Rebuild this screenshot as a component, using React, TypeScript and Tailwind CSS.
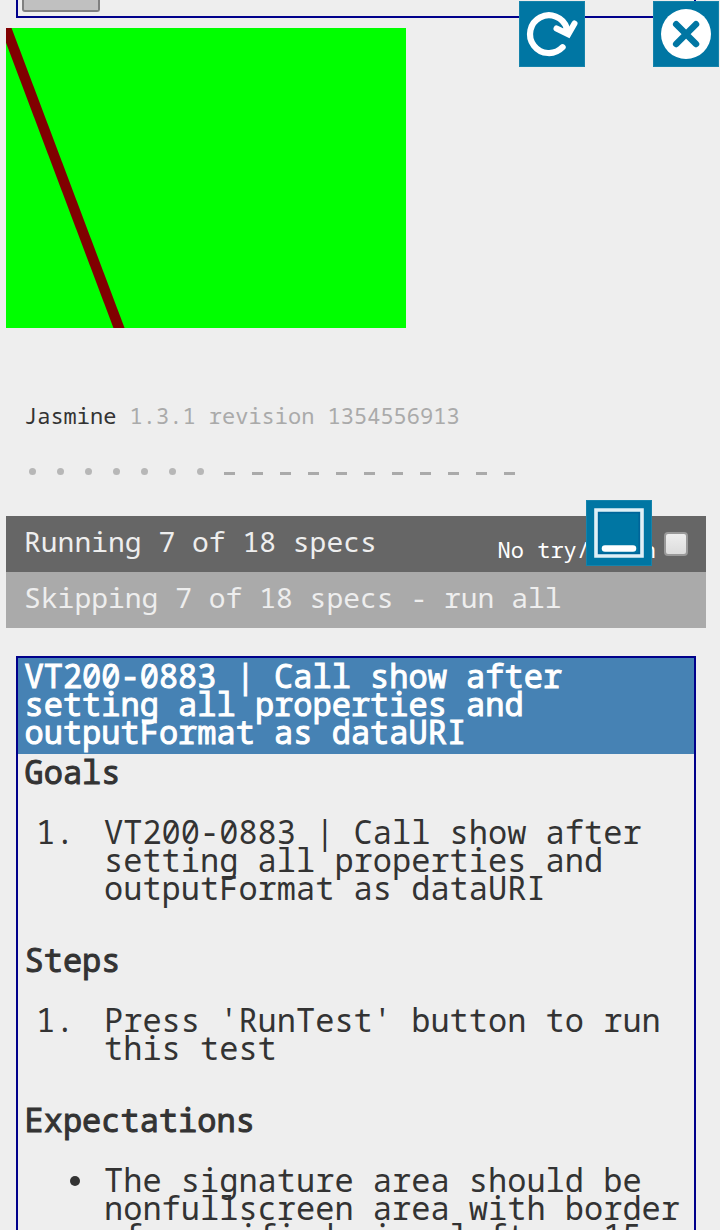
import React from "react";

const symbols = [..."•••••••-----------"];

function Tile({ className, children }: { className: string; children: React.ReactNode }) {
  return (
    <button className={`absolute size-[66px] border border-[#1583ab] bg-[#0076a3] ${className}`}>
      <svg viewBox="0 0 66 66" className="absolute -left-px -top-px size-[66px]" fill="none">
        {children}
      </svg>
    </button>
  );
}

function Heading({ children }: { children: React.ReactNode }) {
  return <h2 className="pl-[6.5px] [-webkit-text-stroke:1px_#333]">{children}</h2>;
}

export default function App() {
  return (
    <main className="relative h-[1230px] w-[720px] overflow-hidden bg-[#eee] font-['Droid_Sans_Mono','Noto_Sans_Mono','DejaVu_Sans_Mono',monospace] text-[#333]">
      <section className="mx-4 h-[18px] w-[680px] border-x-2 border-b-2 border-[#00008b] pl-1">
        <button className="block h-3 w-[78px] rounded-b-[3px] border-2 border-t-0 border-[#808080] bg-[#c0c0c0]" />
      </section>
      <svg className="ml-1.5 mt-2.5 block h-[300px] w-[400px] bg-[#0f0]" viewBox="0 0 400 300">
        <path d="M-5 -13.3L117 310.6" stroke="#800000" strokeWidth="10.4" />
      </svg>

      <div className="mt-[73px] h-7 whitespace-pre pl-6 text-[22px] leading-7">
        Jasmine <span className="text-[#aaa]">1.3.1 revision 1354556913</span>
      </div>
      <ul className="mt-7 flex h-7 pl-6 text-[#aaa]">
        {symbols.map((s, i) => (
          <li key={i} className="flex w-7 items-center">
            {s === "-" ? (
              <i className="ml-1 mt-[5px] h-[3px] w-[11px] bg-[#aaa]" />
            ) : (
              <i className="ml-[5px] size-[7px] rounded-full bg-[#b7b7b7]" />
            )}
          </li>
        ))}
      </ul>

      <div className="ml-1.5 mt-[31px] w-[700px] text-[28px] leading-[56px] text-[#eee]">
        <div className="flex h-14 justify-between bg-[#666] pl-[18px] pr-[18px]">
          <span className="-mt-[3px]">Running 7 of 18 specs</span>
          <label className="flex text-[22px] text-white">
            <span className="pt-[5px]">No try/catch</span>
            <span className="ml-2 mt-4 size-6 rounded-[4px] border-2 border-[#999] bg-linear-to-b from-[#eee] to-[#dcdcdc]" />
          </label>
        </div>
        <div className="h-14 bg-[#aaa] pl-[18px] leading-[50px]">
          Skipping 7 of 18 specs - run all
        </div>
      </div>

      <section className="mx-4 mt-7 h-[640px] w-[680px] border-2 border-[#00008b] text-[32px] leading-7">
        <h1 className="h-24 bg-[#4682b4] pl-[6.5px] pt-[3.5px] text-white [-webkit-text-stroke:1px_#fff]">
          VT200-0883 | Call show after<br />setting all properties and<br />outputFormat as dataURI
        </h1>
        <div className="pt-1">
          <Heading>Goals</Heading>
          <ol className="mt-8 flex">
            <li className="w-[86px] shrink-0 pl-[18px]">1.</li>
            <li>VT200-0883 | Call show after<br />setting all properties and<br />outputFormat as dataURI</li>
          </ol>
          <div className="mt-11"><Heading>Steps</Heading></div>
          <ol className="mt-8 flex">
            <li className="w-[86px] shrink-0 pl-[18px]">1.</li>
            <li>Press 'RunTest' button to run<br />this test</li>
          </ol>
          <div className="mt-11"><Heading>Expectations</Heading></div>
          <div className="mt-8 flex whitespace-nowrap">
            <span className="w-[86px] shrink-0 pl-[52px] pt-2.5"><i className="block size-2.5 rounded-full bg-[#333]" /></span>
            <p>The signature area should be<br />nonfullscreen area with border<br />of specified size,left as 15</p>
          </div>
        </div>
      </section>

      <Tile className="left-[519px] top-px">
        <path d="M43.6 46.2A18.9 18.9 0 1 1 47.8 27" stroke="#fff" strokeWidth="6.2" strokeLinecap="round" />
        <path d="M37.5 27.5L49.3 33.3L55.5 22.5" stroke="#fff" strokeWidth="6" strokeLinecap="round" strokeLinejoin="miter" />
        <path d="M46 24L52 27L50 34L43 30Z" fill="#fff" />
      </Tile>
      <Tile className="left-[653px] top-px">
        <circle cx="33" cy="33" r="25" fill="#fff" />
        <path d="M23.2 23.2L43 43M43 23.2L23.2 43" stroke="#0076a3" strokeWidth="6.5" strokeLinecap="round" />
      </Tile>
      <Tile className="left-[586px] top-[500px]">
        <path d="M10 10H56V56H10Z" stroke="#e0eff6" strokeWidth="3.6" />
        <path d="M12.8 12.8H53.2V53.2H12.8Z" stroke="#00659a" strokeWidth="1.6" />
        <path d="M19 48.5H47" stroke="#fff" strokeWidth="6.5" strokeLinecap="round" />
      </Tile>
    </main>
  );
}
